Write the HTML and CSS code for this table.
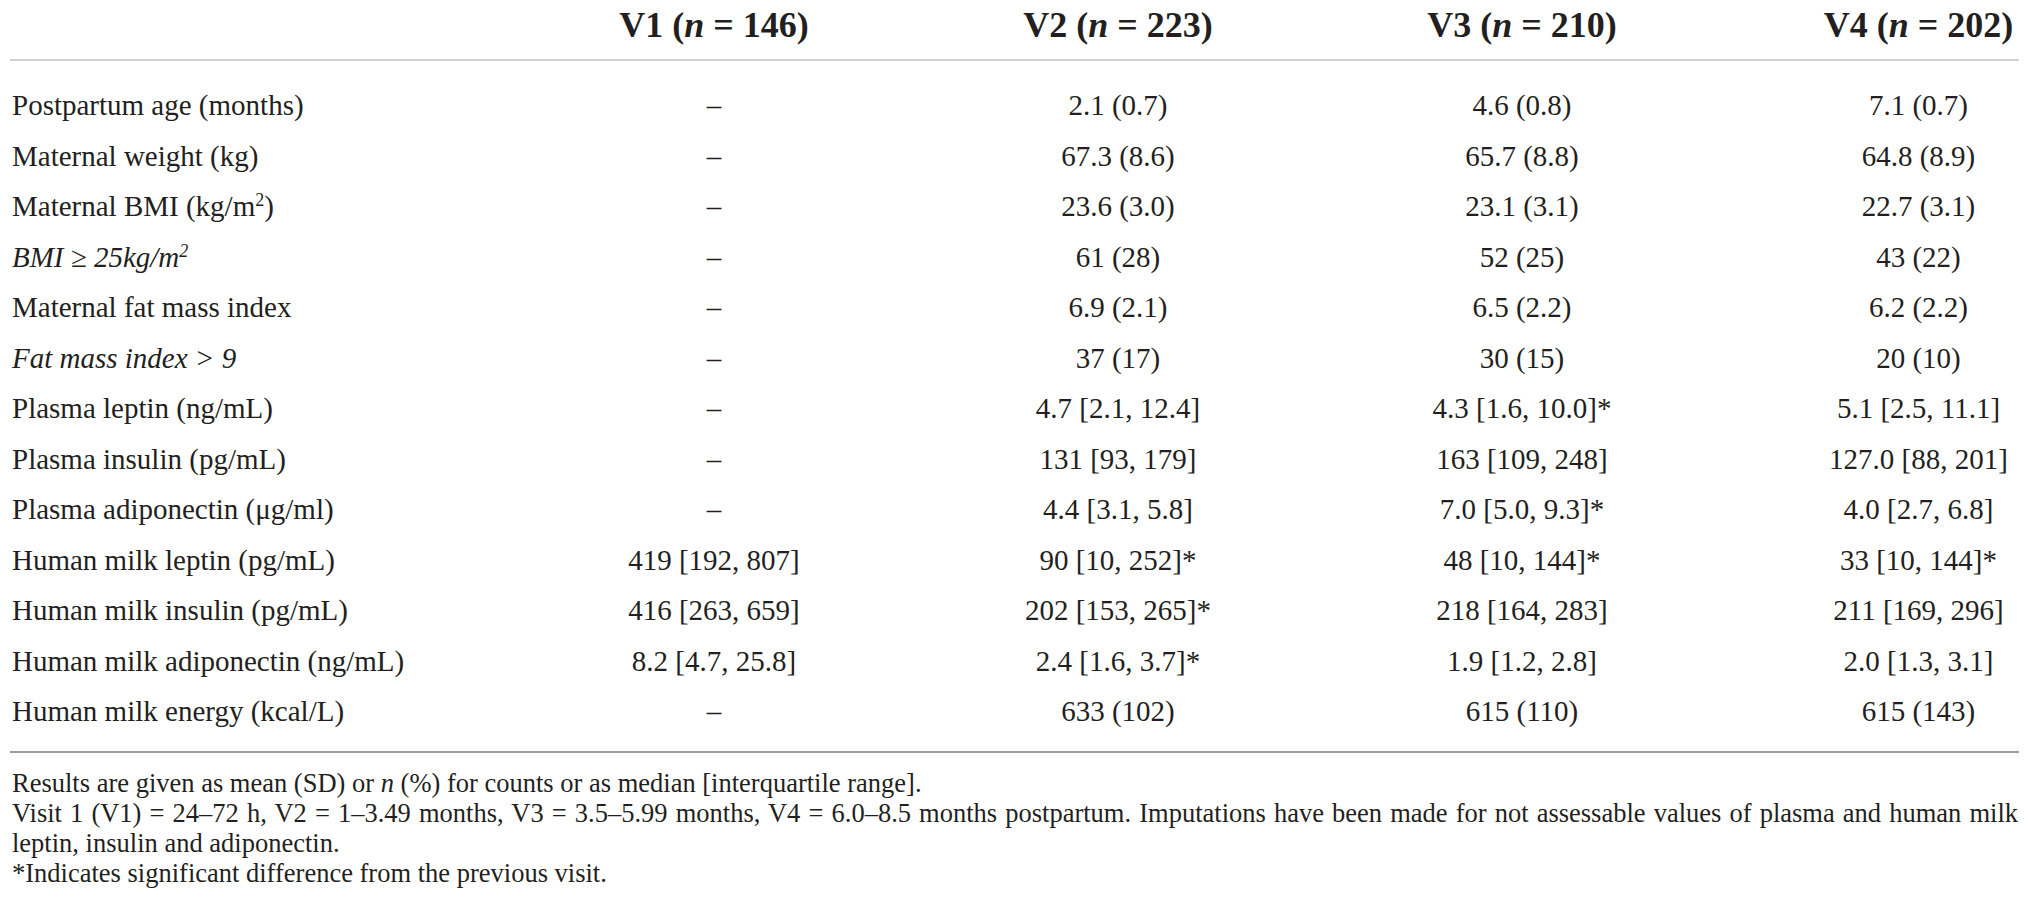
FILE: index.html
```html
<!DOCTYPE html>
<html lang="en">
<head>
    <meta charset="UTF-8">
    <title>Maternal and milk characteristics by visit</title>
    <link rel="stylesheet" href="styles.css">
</head>
<body>
    <div class="table">
        <div class="row head">
            <div class="label"></div>
            <div class="cell">V1 (<i>n</i> = 146)</div>
            <div class="cell">V2 (<i>n</i> = 223)</div>
            <div class="cell">V3 (<i>n</i> = 210)</div>
            <div class="cell">V4 (<i>n</i> = 202)</div>
        </div>
        <div class="rows">
            <div class="row">
                <div class="label">Postpartum age (months)</div>
                <div class="cell">–</div>
                <div class="cell">2.1 (0.7)</div>
                <div class="cell">4.6 (0.8)</div>
                <div class="cell">7.1 (0.7)</div>
            </div>
            <div class="row">
                <div class="label">Maternal weight (kg)</div>
                <div class="cell">–</div>
                <div class="cell">67.3 (8.6)</div>
                <div class="cell">65.7 (8.8)</div>
                <div class="cell">64.8 (8.9)</div>
            </div>
            <div class="row">
                <div class="label">Maternal BMI (kg/m<sup>2</sup>)</div>
                <div class="cell">–</div>
                <div class="cell">23.6 (3.0)</div>
                <div class="cell">23.1 (3.1)</div>
                <div class="cell">22.7 (3.1)</div>
            </div>
            <div class="row">
                <div class="label"><i>BMI ≥ 25kg/m<sup>2</sup></i></div>
                <div class="cell">–</div>
                <div class="cell">61 (28)</div>
                <div class="cell">52 (25)</div>
                <div class="cell">43 (22)</div>
            </div>
            <div class="row">
                <div class="label">Maternal fat mass index</div>
                <div class="cell">–</div>
                <div class="cell">6.9 (2.1)</div>
                <div class="cell">6.5 (2.2)</div>
                <div class="cell">6.2 (2.2)</div>
            </div>
            <div class="row">
                <div class="label"><i>Fat mass index &gt; 9</i></div>
                <div class="cell">–</div>
                <div class="cell">37 (17)</div>
                <div class="cell">30 (15)</div>
                <div class="cell">20 (10)</div>
            </div>
            <div class="row">
                <div class="label">Plasma leptin (ng/mL)</div>
                <div class="cell">–</div>
                <div class="cell">4.7 [2.1, 12.4]</div>
                <div class="cell">4.3 [1.6, 10.0]*</div>
                <div class="cell">5.1 [2.5, 11.1]</div>
            </div>
            <div class="row">
                <div class="label">Plasma insulin (pg/mL)</div>
                <div class="cell">–</div>
                <div class="cell">131 [93, 179]</div>
                <div class="cell">163 [109, 248]</div>
                <div class="cell">127.0 [88, 201]</div>
            </div>
            <div class="row">
                <div class="label">Plasma adiponectin (μg/ml)</div>
                <div class="cell">–</div>
                <div class="cell">4.4 [3.1, 5.8]</div>
                <div class="cell">7.0 [5.0, 9.3]*</div>
                <div class="cell">4.0 [2.7, 6.8]</div>
            </div>
            <div class="row">
                <div class="label">Human milk leptin (pg/mL)</div>
                <div class="cell">419 [192, 807]</div>
                <div class="cell">90 [10, 252]*</div>
                <div class="cell">48 [10, 144]*</div>
                <div class="cell">33 [10, 144]*</div>
            </div>
            <div class="row">
                <div class="label">Human milk insulin (pg/mL)</div>
                <div class="cell">416 [263, 659]</div>
                <div class="cell">202 [153, 265]*</div>
                <div class="cell">218 [164, 283]</div>
                <div class="cell">211 [169, 296]</div>
            </div>
            <div class="row">
                <div class="label">Human milk adiponectin (ng/mL)</div>
                <div class="cell">8.2 [4.7, 25.8]</div>
                <div class="cell">2.4 [1.6, 3.7]*</div>
                <div class="cell">1.9 [1.2, 2.8]</div>
                <div class="cell">2.0 [1.3, 3.1]</div>
            </div>
            <div class="row">
                <div class="label">Human milk energy (kcal/L)</div>
                <div class="cell">–</div>
                <div class="cell">633 (102)</div>
                <div class="cell">615 (110)</div>
                <div class="cell">615 (143)</div>
            </div>
        </div>
    </div>
    <div class="notes">
        <p>Results are given as mean (SD) or <i>n</i> (%) for counts or as median [interquartile range].</p>
        <p>Visit 1 (V1) = 24–72 h, V2 = 1–3.49 months, V3 = 3.5–5.99 months, V4 = 6.0–8.5 months postpartum. Imputations have been made for not assessable values of plasma and human milk leptin, insulin and adiponectin.</p>
        <p>*Indicates significant difference from the previous visit.</p>
    </div>
</body>
</html>
```

FILE: styles.css
```css
body {
    margin: 0;
    background-color: #ffffff;
    color: #231f20;
    font-family: "Liberation Serif", "Times New Roman", serif;
}
.table {
    width: 2009px;
    margin-left: 10px;
    border-bottom: 2px solid #9c9c9c;
}
.row {
    display: grid;
    grid-template-columns: 502px 404px 404px 404px 295px;
    height: 50.5px;
    line-height: 50.5px;
    font-size: 29px;
}
.row .label {
    padding-left: 2px;
    white-space: nowrap;
}
.row .cell {
    text-align: center;
    white-space: nowrap;
}
.row .cell:last-child {
    padding-left: 94px;
}
.head {
    height: auto;
    line-height: 44px;
    padding: 3px 0 12px 0;
    font-size: 36px;
    font-weight: bold;
    border-bottom: 2px solid #d0d0d0;
}
.rows {
    padding: 19px 0 14px 0;
}
sup {
    font-size: 0.62em;
    line-height: 0;
    vertical-align: 0.55em;
}
.notes {
    width: 2006px;
    margin: 15px 0 0 12px;
    font-size: 26.5px;
    line-height: 30px;
    text-align: justify;
}
.notes p {
    margin: 0;
}
```
